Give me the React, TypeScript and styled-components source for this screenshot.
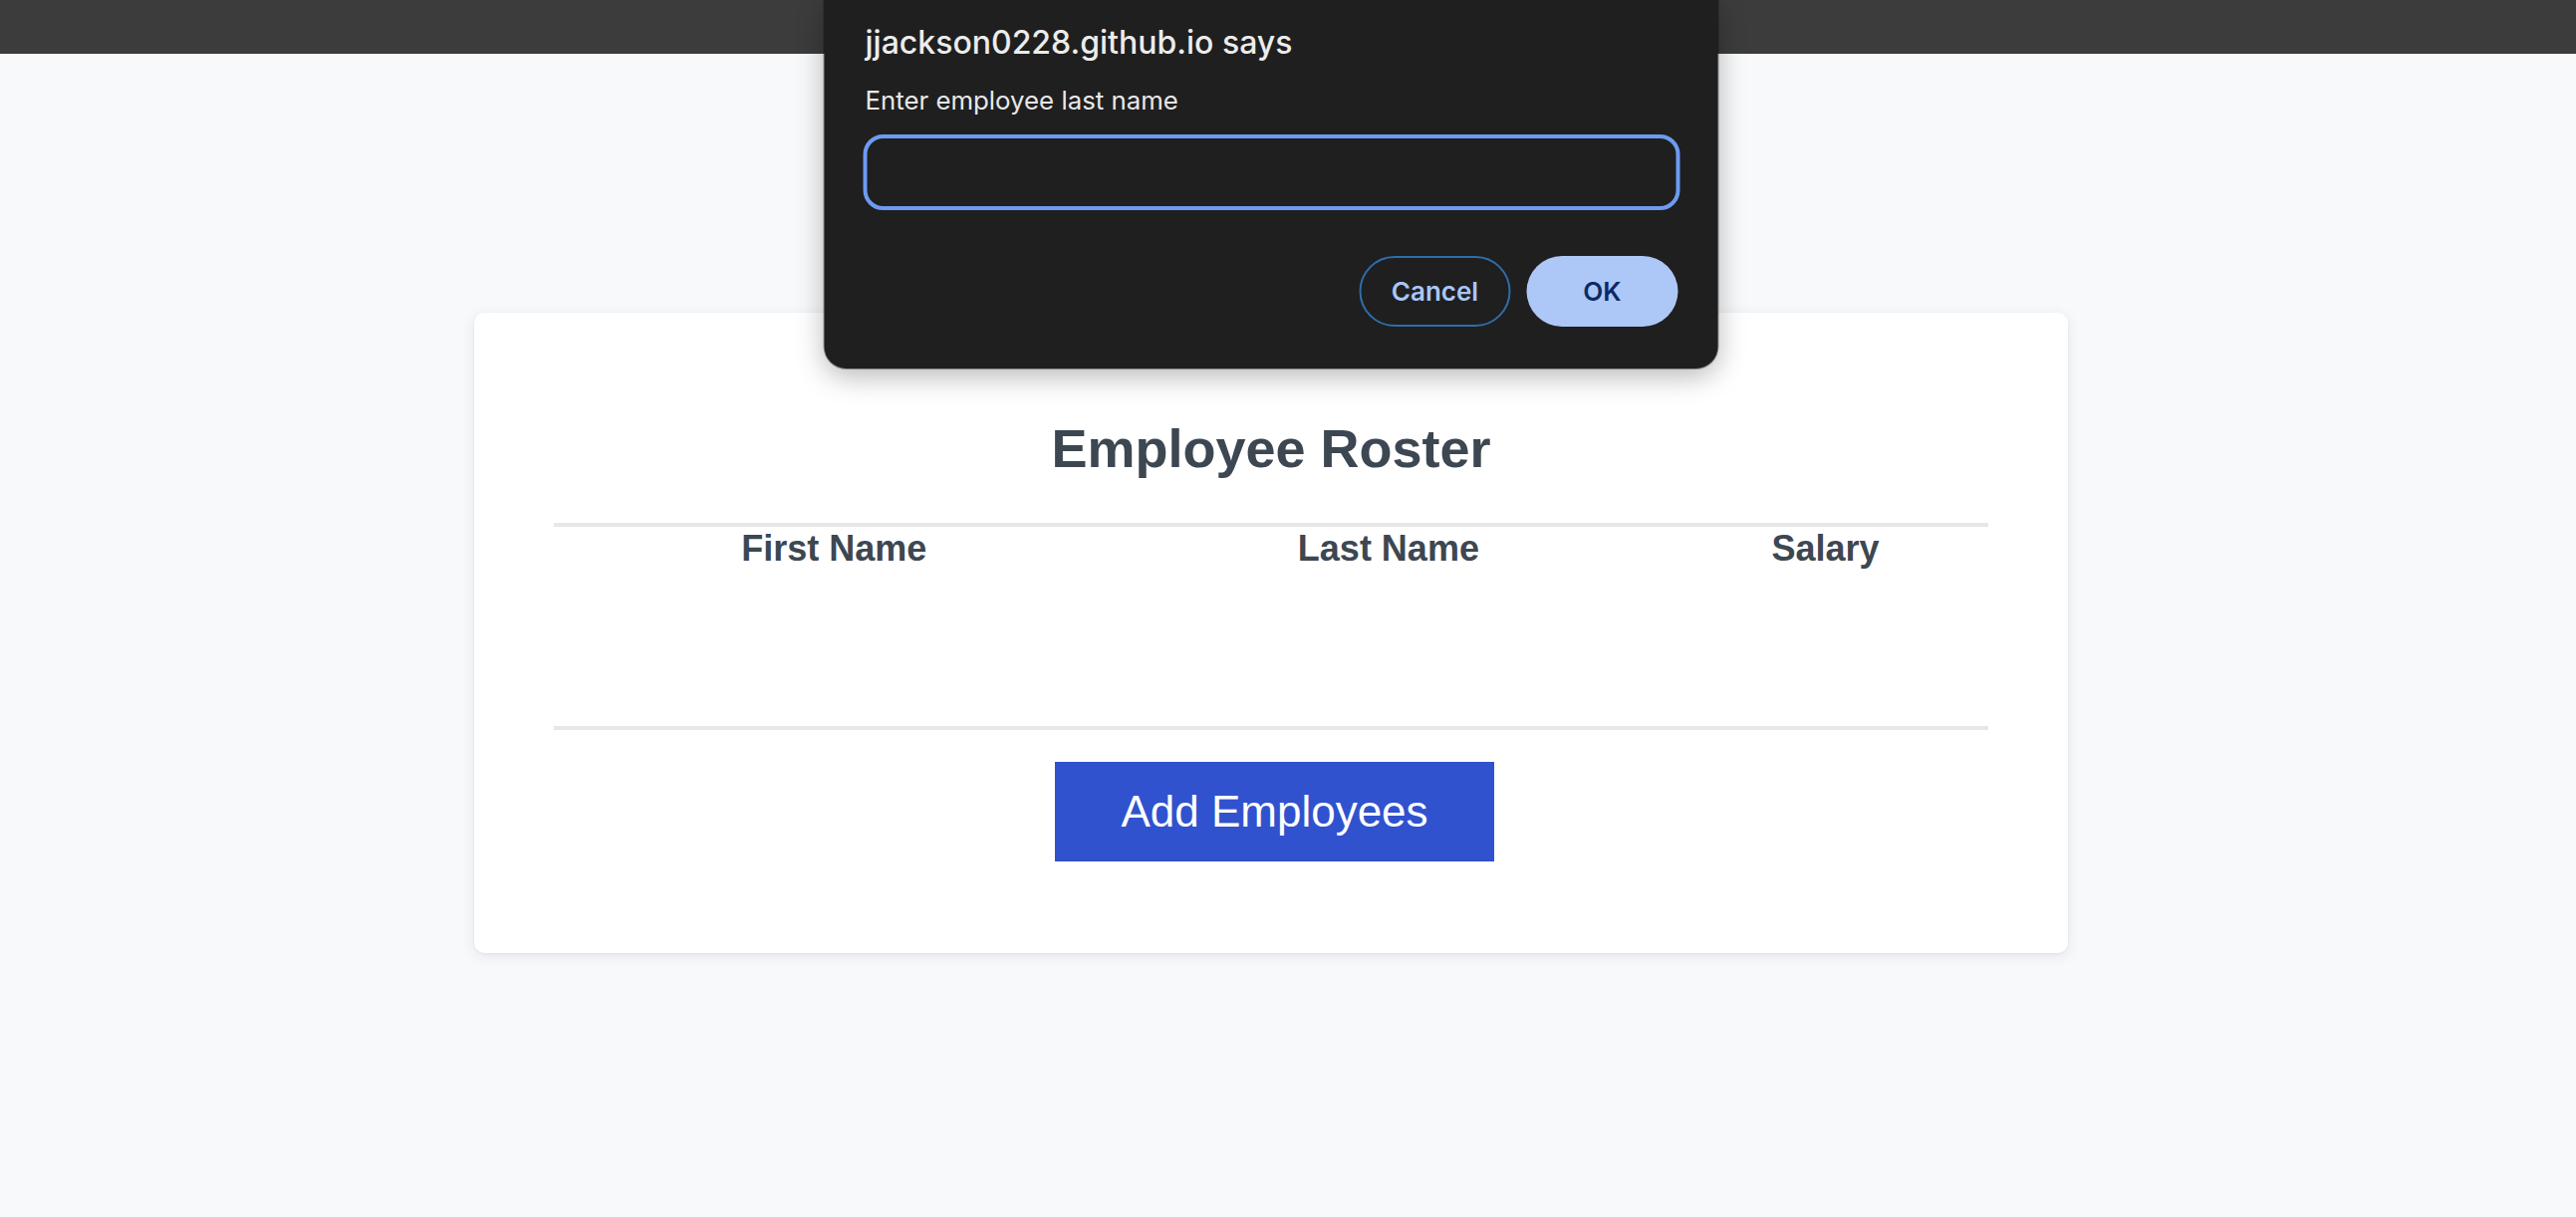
import React from "react";
import styled, { createGlobalStyle } from "styled-components";

const GlobalStyle = createGlobalStyle`
  html, body {
    margin: 0;
    padding: 0;
    background: #f8f9fb;
  }
  * { box-sizing: border-box; }
`;

const Page = styled.div`
  position: relative;
  min-height: 1222px;
  background: #f8f9fb;
  font-family: "Liberation Sans", Arial, sans-serif;
`;

const TopBar = styled.div`
  height: 54px;
  background: #3c3c3c;
`;

const Stage = styled.main`
  width: calc(100% - 34px);
  display: flex;
  justify-content: center;
  padding-top: 260px;
`;

const Card = styled.section`
  width: 1600px;
  background: #ffffff;
  border-radius: 10px;
  box-shadow: 0 3px 14px rgba(30, 40, 60, 0.09), 0 1px 3px rgba(30, 40, 60, 0.06);
  padding: 105px 80px 92px;
  display: flex;
  flex-direction: column;
`;

const Title = styled.h1`
  margin: 0;
  font-size: 54px;
  line-height: 62px;
  font-weight: 700;
  color: #3d4751;
  text-align: center;
`;

const Divider = styled.div<{ $top: number }>`
  height: 4px;
  background: #e6e7e9;
  margin-top: ${(p) => p.$top}px;
`;

const RosterTable = styled.table`
  width: 100%;
  border-collapse: collapse;
  border-spacing: 0;
  margin: 1px 0 158px;
`;

const HeadCell = styled.th`
  padding: 0;
  font-size: 36px;
  line-height: 41px;
  font-weight: 700;
  color: #3d4751;
  text-align: center;
`;

const ActionRow = styled.div`
  display: flex;
  justify-content: center;
  margin-top: 32px;
  padding-left: 7px;
`;

const AddButton = styled.button`
  height: 100px;
  padding: 0 66px;
  border: none;
  background: #3052ce;
  color: #ffffff;
  font-family: "Liberation Sans", Arial, sans-serif;
  font-size: 44px;
  cursor: pointer;
`;

const Dialog = styled.div`
  position: absolute;
  top: 0;
  left: calc(50% - 17px);
  transform: translateX(-50%);
  width: 897px;
  height: 370px;
  background: #1f1f1f;
  border-radius: 0 0 22px 22px;
  box-shadow: 0 8px 28px rgba(0, 0, 0, 0.28), 0 0 0 1px rgba(0, 0, 0, 0.35);
  padding: 0 38px 0 39px;
  font-family: Inter, "Noto Sans", sans-serif;
  display: flex;
  flex-direction: column;
`;

const DialogTitle = styled.div`
  margin-top: 23px;
  font-size: 32px;
  line-height: 40px;
  font-weight: 500;
  color: #ececec;
  padding-left: 2px;
`;

const DialogMessage = styled.div`
  margin-top: 23px;
  font-size: 25.8px;
  line-height: 30px;
  color: #e8e8e8;
  padding-left: 2px;
`;

const PromptInput = styled.input`
  margin-top: 19px;
  width: 100%;
  height: 76px;
  border: 4px solid #6d9bf1;
  border-radius: 20px;
  background: #1f1f1f;
  outline: none;
  color: #ececec;
  font-family: Inter, sans-serif;
  font-size: 26px;
  padding: 0 20px;
`;

const ButtonRow = styled.div`
  display: flex;
  justify-content: flex-end;
  gap: 16px;
  margin-top: 46px;
  padding-right: 2px;
`;

const PillButton = styled.button<{ $primary?: boolean }>`
  width: 152px;
  height: 71px;
  border-radius: 36px;
  font-family: Inter, sans-serif;
  font-size: 26px;
  font-weight: 600;
  cursor: pointer;
  border: ${(p) => (p.$primary ? "none" : "2px solid #2e6eaa")};
  background: ${(p) => (p.$primary ? "#adc7f6" : "transparent")};
  color: ${(p) => (p.$primary ? "#0b2a66" : "#a9c6f7")};
`;

export default function App() {
  return (
    <Page>
      <GlobalStyle />
      <TopBar />
      <Stage>
        <Card>
          <Title>Employee Roster</Title>
          <Divider $top={44} />
          <RosterTable>
            <thead>
              <tr>
                <HeadCell>First Name</HeadCell>
                <HeadCell>Last Name</HeadCell>
                <HeadCell>Salary</HeadCell>
              </tr>
            </thead>
            <tbody />
          </RosterTable>
          <Divider $top={0} />
          <ActionRow>
            <AddButton>Add Employees</AddButton>
          </ActionRow>
        </Card>
      </Stage>
      <Dialog>
        <DialogTitle>jjackson0228.github.io says</DialogTitle>
        <DialogMessage>Enter employee last name</DialogMessage>
        <PromptInput />
        <ButtonRow>
          <PillButton>Cancel</PillButton>
          <PillButton $primary>OK</PillButton>
        </ButtonRow>
      </Dialog>
    </Page>
  );
}
